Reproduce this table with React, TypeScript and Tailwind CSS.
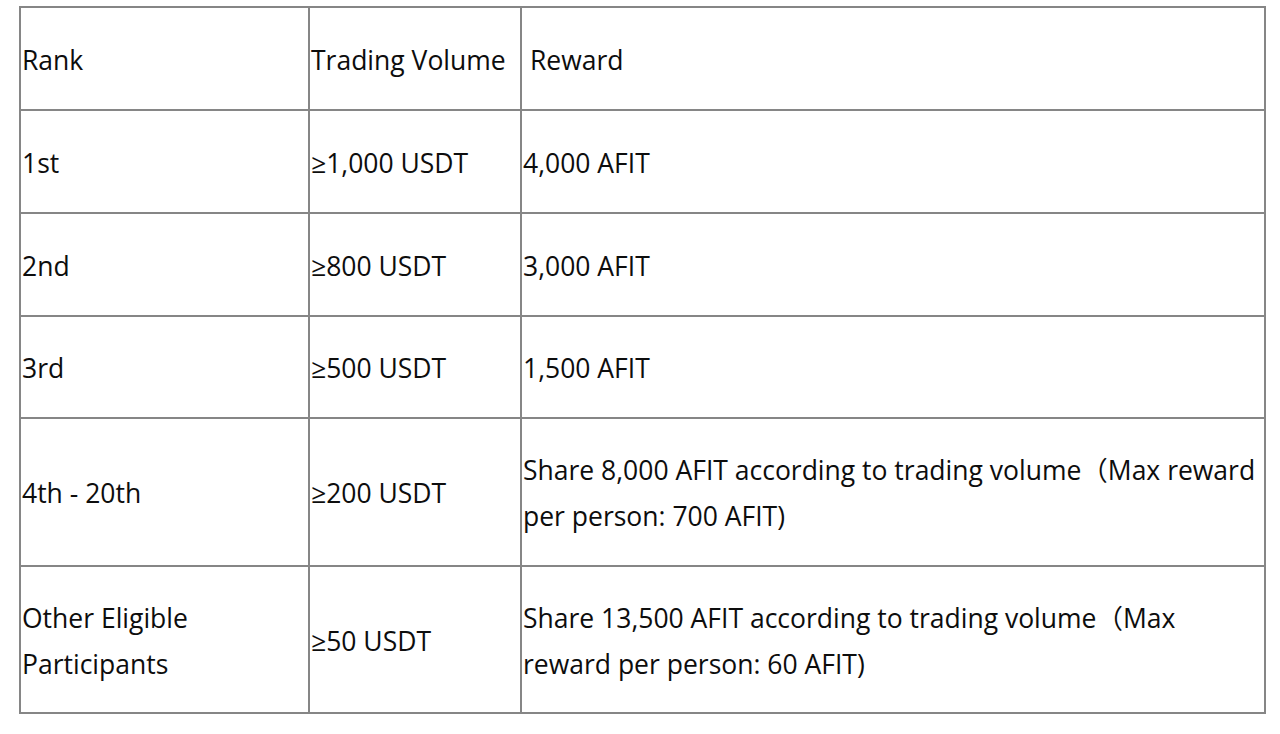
import React from "react";

const rows: { rank: React.ReactNode; vol: string; reward: React.ReactNode; h: string }[] = [
  { rank: "1st", vol: "≥1,000 USDT", reward: "4,000 AFIT", h: "h-[103px]" },
  { rank: "2nd", vol: "≥800 USDT", reward: "3,000 AFIT", h: "h-[103px]" },
  { rank: "3rd", vol: "≥500 USDT", reward: "1,500 AFIT", h: "h-[102px]" },
  {
    rank: "4th - 20th",
    vol: "≥200 USDT",
    reward: (
      <>
        Share 8,000 AFIT according to trading volume（Max reward
        <br />
        per person: 700 AFIT)
      </>
    ),
    h: "h-[148px]",
  },
  {
    rank: (
      <>
        Other Eligible
        <br />
        Participants
      </>
    ),
    vol: "≥50 USDT",
    reward: (
      <>
        Share 13,500 AFIT according to trading volume（Max
        <br />
        reward per person: 60 AFIT)
      </>
    ),
    h: "h-[147px]",
  },
];

const cell = "border-2 border-[#868686] align-middle p-0 pt-[2px] pl-px leading-[46px] whitespace-nowrap";

export default function App() {
  return (
    <div
      className="min-h-[734px] bg-white pt-[6px] pl-[19px] text-[#0d0d0d] text-[26.5px]"
      style={{ fontFamily: '"Open Sans", "Noto Sans", "Noto Sans CJK SC", sans-serif' }}
    >
      <table className="table-fixed border-collapse w-[1247px]">
        <colgroup>
          <col className="w-[289px]" />
          <col className="w-[212px]" />
          <col />
        </colgroup>
        <tbody>
          <tr className="h-[103px]">
            <td className={cell}>Rank</td>
            <td className={cell}>Trading Volume</td>
            <td className={cell}>
              <span className="pl-[7px]">Reward</span>
            </td>
          </tr>
          {rows.map((r, i) => (
            <tr key={i} className={r.h}>
              <td className={cell}>{r.rank}</td>
              <td className={cell}>{r.vol}</td>
              <td className={cell}>{r.reward}</td>
            </tr>
          ))}
        </tbody>
      </table>
    </div>
  );
}
